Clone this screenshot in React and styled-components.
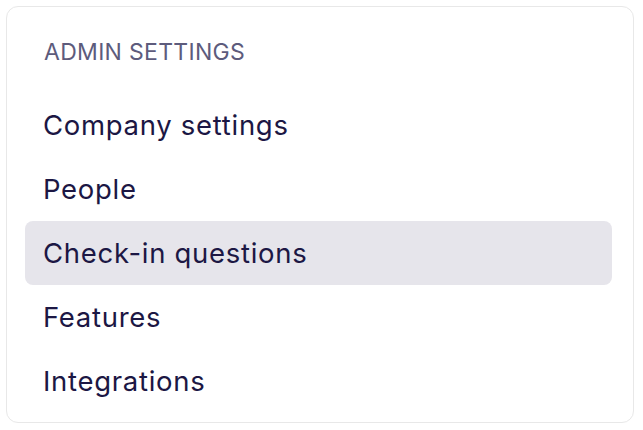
import React from "react";
import styled, { createGlobalStyle } from "styled-components";

const GlobalStyle = createGlobalStyle`
    html, body {
        margin: 0;
        padding: 0;
        background: #ffffff;
    }
    body {
        font-family: Inter, "Noto Sans", sans-serif;
    }
`;

const Page = styled.div`
    padding: 6px 9px 7px 6px;
`;

const Card = styled.nav`
    box-sizing: border-box;
    height: 417px;
    border: 1.5px solid #e8e8e8;
    border-radius: 12px;
    padding: 29px 21px 0 18px;
    display: flex;
    flex-direction: column;
`;

const Heading = styled.h2`
    margin: 0 0 0 19px;
    height: 32px;
    line-height: 32px;
    font-size: 23px;
    font-weight: 400;
    color: #5d5b7c;
    letter-spacing: 0.3px;
`;

const Menu = styled.ul`
    list-style: none;
    margin: 25px 0 0 0;
    padding: 0;
    display: flex;
    flex-direction: column;
`;

const Item = styled.li`
    height: 64px;
    display: flex;
    align-items: center;
    padding-left: 18px;
    border-radius: 8px;
    font-size: 27.5px;
    font-weight: 400;
    letter-spacing: 0.7px;
    color: #1c1744;
    background: ${(p) => (p.$active ? "#e6e5eb" : "transparent")};
    cursor: pointer;
`;

const items = ["Company settings", "People", "Check-in questions", "Features", "Integrations"];

export default function App() {
    return (
        <>
            <GlobalStyle />
            <Page>
                <Card>
                    <Heading>ADMIN SETTINGS</Heading>
                    <Menu>
                        {items.map((label) => (
                            <Item key={label} $active={label === "Check-in questions"}>
                                {label}
                            </Item>
                        ))}
                    </Menu>
                </Card>
            </Page>
        </>
    );
}
